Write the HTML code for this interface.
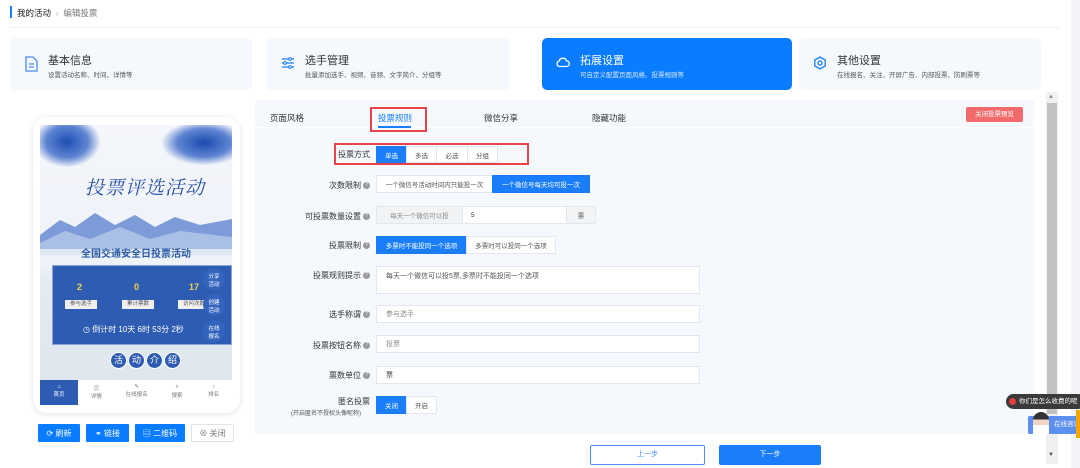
<!DOCTYPE html>
<html><head><meta charset="utf-8"><style>
*{margin:0;padding:0;box-sizing:border-box}
body{width:1080px;height:468px;overflow:hidden;background:#fff;font-family:"Liberation Sans","Noto Sans CJK SC",sans-serif;position:relative;color:#333}
.a{position:absolute}
.card{position:absolute;top:38px;height:52px;background:#f5f8fd;border-radius:5px}
.card .t{position:absolute;left:38px;top:14px;font-size:11px;color:#333}
.card .s{position:absolute;left:38px;top:31px;font-size:6.5px;color:#555}
.card svg{position:absolute;left:14px;top:18px}
.lbl{position:absolute;right:710px;font-size:8px;color:#333;white-space:nowrap}
.q{display:inline-block;width:7px;height:7px;border-radius:50%;background:#999;color:#fff;font-size:5px;line-height:7px;text-align:center;margin-left:2px;vertical-align:middle}
.b{position:absolute;font-size:6.5px;text-align:center;border:1px solid #e2e6ee;background:#fff;color:#555;display:flex;align-items:center;justify-content:center}
.bl{background:#1a7efb;color:#fff;border-color:#1a7efb}
.in{position:absolute;left:376px;width:324px;background:#fff;border:1px solid #e2e6ee;font-size:7px;color:#555;padding-left:9px;display:flex;align-items:center}
.pb{position:absolute;top:424px;height:18px;background:#0a7cff;color:#fff;font-size:8px;display:flex;align-items:center;justify-content:center;border-radius:1px}
</style></head><body>
<div class="a" style="left:10px;top:6px;width:2px;height:12px;background:#1a7efb"></div>
<div class="a" style="left:17px;top:7px;font-size:8.5px;color:#222">我的活动 <span style="color:#aaa">&nbsp;›&nbsp;</span> <span style="color:#777">编辑投票</span></div>
<div class="a" style="left:10px;top:27px;width:1050px;height:1px;background:#eceff3"></div>

<div class="card" style="left:10px;width:242px"><svg width="14" height="16" viewBox="0 0 14 16"><path d="M2 1h7l4 4v10H2z" fill="none" stroke="#4a8cf5" stroke-width="1.3"/><path d="M5 8h5M5 11h5" stroke="#4a8cf5" stroke-width="1.2"/></svg><div class="t">基本信息</div><div class="s">设置活动名称、时间、详情等</div></div>
<div class="card" style="left:267px;width:242px"><svg width="14" height="14" viewBox="0 0 14 14"><path d="M1 3h12M1 7h12M1 11h12" stroke="#1a7efb" stroke-width="1.3"/><circle cx="9" cy="3" r="1.4" fill="#fff" stroke="#1a7efb"/><circle cx="4" cy="7" r="1.4" fill="#fff" stroke="#1a7efb"/><circle cx="9" cy="11" r="1.4" fill="#fff" stroke="#1a7efb"/></svg><div class="t">选手管理</div><div class="s">批量添加选手、视频、音频、文字简介、分组等</div></div>
<div class="card" style="left:542px;width:250px;background:#0a7cff"><svg width="14" height="12" viewBox="0 0 14 12"><path d="M3.5 10.5h7a2.8 2.8 0 0 0 0-5.6A3.8 3.8 0 0 0 3.2 5 2.8 2.8 0 0 0 3.5 10.5z" fill="none" stroke="#fff" stroke-width="1.3"/></svg><div class="t" style="color:#fff">拓展设置</div><div class="s" style="color:#dbe9ff">可自定义配置页面风格、投票规则等</div></div>
<div class="card" style="left:799px;width:242px"><svg width="14" height="14" viewBox="0 0 14 14"><path d="M7 1l5.2 3v6L7 13 1.8 10V4z" fill="none" stroke="#1a7efb" stroke-width="1.3"/><circle cx="7" cy="7" r="2" fill="none" stroke="#1a7efb" stroke-width="1.3"/></svg><div class="t">其他设置</div><div class="s">在线报名、关注、开屏广告、内部投票、防刷票等</div></div>

<!-- phone -->
<div class="a" style="left:33px;top:117px;width:207px;height:296px;background:#fff;border-radius:14px;box-shadow:0 1px 6px rgba(0,0,0,.12)"></div>
<div class="a" style="left:40px;top:125px;width:192px;height:256px;background:linear-gradient(#f4f6fb 0%,#eef2f9 55%,#e4eaf2 62%,#dfe6ee 100%);overflow:hidden">
 <div class="a" style="left:0;top:0;width:60px;height:42px;background:radial-gradient(ellipse at 45% 40%,#1f4fb5,#5f85d2 45%,transparent 72%)"></div>
 <div class="a" style="right:0;top:0;width:70px;height:40px;background:radial-gradient(ellipse at 60% 45%,#1b49b0,#5f85d2 45%,transparent 72%)"></div>
 <svg class="a" style="left:0;top:80px" width="192" height="50" viewBox="0 0 192 50"><path d="M0 30 L20 15 L35 22 L55 8 L75 20 L95 10 L115 22 L135 12 L160 20 L192 14 L192 50 L0 50z" fill="#7d9bd8"/><path d="M0 38 L25 26 L50 34 L80 22 L110 34 L140 26 L192 32 L192 50 L0 50z" fill="#a9bfe6"/><rect x="0" y="44" width="192" height="6" fill="#dfe7f3"/></svg>
 <div class="a" style="left:45px;top:48px;font-family:'Noto Serif CJK SC',serif;font-size:19px;color:#2a4fa8;font-style:italic;letter-spacing:1px">投票评选活动</div>
 <div class="a" style="left:0;top:120px;width:192px;font-size:10px;font-weight:bold;color:#2a5aa8;text-align:center">全国交通安全日投票活动</div>
 <div class="a" style="left:12px;top:140px;width:180px;height:80px;background:#2d5cb2;border:1px solid #8aa5d8">
  <div class="a" style="left:24px;top:16px;color:#f5d34a;font-size:9px;font-weight:bold">2</div>
  <div class="a" style="left:81px;top:16px;color:#f5d34a;font-size:9px;font-weight:bold">0</div>
  <div class="a" style="left:136px;top:16px;color:#f5d34a;font-size:9px;font-weight:bold">17</div>
  <div class="a" style="left:12px;top:34px;width:32px;height:9px;background:#f0f0f0;font-size:5.5px;color:#555;text-align:center;line-height:9px">参与选手</div>
  <div class="a" style="left:69px;top:34px;width:32px;height:9px;background:#f0f0f0;font-size:5.5px;color:#555;text-align:center;line-height:9px">累计票数</div>
  <div class="a" style="left:125px;top:34px;width:32px;height:9px;background:#f0f0f0;font-size:5.5px;color:#555;text-align:center;line-height:9px">访问次数</div>
  <div class="a" style="left:30px;top:58px;color:#fff;font-size:8px;white-space:nowrap">◷ 倒计时 10天 6时 53分 2秒</div>
  <div class="a" style="left:150px;top:2px;width:22px;height:22px;border-radius:50%;background:#3465be;color:#fff;font-size:5.5px;text-align:center;padding-top:4px">分享<br>活动</div>
  <div class="a" style="left:150px;top:28px;width:22px;height:22px;border-radius:50%;background:#3465be;color:#fff;font-size:5.5px;text-align:center;padding-top:4px">创建<br>活动</div>
  <div class="a" style="left:150px;top:54px;width:22px;height:22px;border-radius:50%;background:#3465be;color:#fff;font-size:5.5px;text-align:center;padding-top:4px">在线<br>报名</div>
 </div>
 <div class="a" style="left:70px;top:227px;display:flex;gap:1px">
  <div style="width:17px;height:17px;border-radius:50%;background:#2d5cb2;border:1px solid #fff;color:#fff;font-size:9px;text-align:center;line-height:15px">活</div>
  <div style="width:17px;height:17px;border-radius:50%;background:#2d5cb2;border:1px solid #fff;color:#fff;font-size:9px;text-align:center;line-height:15px">动</div>
  <div style="width:17px;height:17px;border-radius:50%;background:#2d5cb2;border:1px solid #fff;color:#fff;font-size:9px;text-align:center;line-height:15px">介</div>
  <div style="width:17px;height:17px;border-radius:50%;background:#2d5cb2;border:1px solid #fff;color:#fff;font-size:9px;text-align:center;line-height:15px">绍</div>
 </div>
</div>
<div class="a" style="left:40px;top:380px;width:192px;height:25px;background:#fff;display:flex;font-size:5.5px;color:#777;text-align:center">
 <div style="width:38px;background:#2d5cb2;color:#fff;padding-top:4px">⌂<br>首页</div>
 <div style="flex:1;padding-top:4px">▥<br>详情</div>
 <div style="flex:1.2;padding-top:4px">✎<br>在线报名</div>
 <div style="flex:1;padding-top:4px">⌕<br>搜索</div>
 <div style="flex:1;padding-top:4px">♁<br>排名</div>
</div>
<div class="pb" style="left:38px;width:42px">⟳ 刷新</div>
<div class="pb" style="left:86px;width:43px">⚭ 链接</div>
<div class="pb" style="left:135px;width:50px">▤ 二维码</div>
<div class="pb" style="left:191px;width:43px;background:#fff;color:#777;border:1px solid #e0e3e8">⊗ 关闭</div>

<!-- panel -->
<div class="a" style="left:255px;top:100px;width:779px;height:334px;background:#f5f8fd"></div>
<div class="a" style="left:255px;top:127px;width:779px;height:1px;background:#fff"></div>
<div class="a" style="left:270px;top:112px;font-size:8.5px;color:#333">页面风格</div>
<div class="a" style="left:378px;top:112px;font-size:8.5px;color:#1a7efb">投票规则</div>
<div class="a" style="left:378px;top:126px;width:33px;height:1.5px;background:#1a7efb"></div>
<div class="a" style="left:370px;top:107px;width:57px;height:25px;border:2px solid #e8424a"></div>
<div class="a" style="left:484px;top:112px;font-size:8.5px;color:#333">微信分享</div>
<div class="a" style="left:592px;top:112px;font-size:8.5px;color:#333">隐藏功能</div>
<div class="a" style="left:966px;top:107px;width:57px;height:15px;background:#f26a6a;border-radius:2px;color:#fff;font-size:6.5px;text-align:center;line-height:15px">关闭投票预览</div>

<div class="a" style="left:334px;top:143px;width:195px;height:22px;border:2px solid #e8424a"></div>
<div class="lbl" style="top:149px">投票方式</div>
<div class="b bl" style="left:376px;top:146px;width:31px;height:17px">单选</div>
<div class="b" style="left:406px;top:146px;width:31px;height:17px">多选</div>
<div class="b" style="left:436px;top:146px;width:32px;height:17px">必选</div>
<div class="b" style="left:467px;top:146px;width:31px;height:17px">分组</div>

<div class="lbl" style="top:180px">次数限制<span class="q">?</span></div>
<div class="b" style="left:376px;top:175px;width:117px;height:18px">一个微信号活动时间内只能投一次</div>
<div class="b bl" style="left:492px;top:175px;width:98px;height:18px">一个微信号每天均可投一次</div>

<div class="lbl" style="top:211px">可投票数量设置<span class="q">?</span></div>
<div class="b" style="left:376px;top:206px;width:87px;height:18px;background:#f2f3f5;color:#888">每天一个微信可以投</div>
<div class="b" style="left:462px;top:206px;width:105px;height:18px;justify-content:flex-start;padding-left:8px;color:#333">5</div>
<div class="b" style="left:566px;top:206px;width:30px;height:18px;background:#f2f3f5">票</div>

<div class="lbl" style="top:240px">投票限制<span class="q">?</span></div>
<div class="b bl" style="left:376px;top:236px;width:91px;height:18px">多票时不能投同一个选项</div>
<div class="b" style="left:466px;top:236px;width:90px;height:18px">多票时可以投同一个选项</div>

<div class="lbl" style="top:270px">投票规则提示<span class="q">?</span></div>
<div class="in" style="top:266px;height:28px;align-items:flex-start;padding-top:4px">每天一个微信可以投5票,多票时不能投同一个选项</div>

<div class="lbl" style="top:309px">选手称谓<span class="q">?</span></div>
<div class="in" style="top:305px;height:18px;color:#888">参与选手</div>
<div class="lbl" style="top:340px">投票按钮名称<span class="q">?</span></div>
<div class="in" style="top:335px;height:18px;color:#888">投票</div>
<div class="lbl" style="top:370px">票数单位<span class="q">?</span></div>
<div class="in" style="top:366px;height:18px;color:#333">票</div>

<div class="lbl" style="top:396px">匿名投票</div>
<div class="a" style="left:291px;top:408px;font-size:6px;color:#555">(开启匿名不授权头像昵称)</div>
<div class="b bl" style="left:376px;top:396px;width:31px;height:18px">关闭</div>
<div class="b" style="left:406px;top:396px;width:31px;height:18px">开启</div>

<div class="a" style="left:590px;top:445px;width:115px;height:20px;border:1px solid #4a8cf5;border-radius:2px;color:#4a8cf5;font-size:7px;text-align:center;line-height:18px">上一步</div>
<div class="a" style="left:719px;top:445px;width:102px;height:20px;background:#1a7efb;border-radius:2px;color:#fff;font-size:7px;text-align:center;line-height:20px">下一步</div>

<!-- scrollbar -->
<div class="a" style="left:1046px;top:92px;width:12px;height:372px;background:#f0f0f0"></div>
<div class="a" style="left:1047px;top:103px;width:10px;height:311px;background:#c1c1c1"></div>
<div class="a" style="left:1048px;top:94px;font-size:6px;color:#888">▲</div>
<div class="a" style="left:1048px;top:452px;font-size:6px;color:#555">▼</div>
<div class="a" style="left:1071px;top:0;width:9px;height:468px;background:#f3f4f7"></div>

<div class="a" style="left:1006px;top:394px;width:80px;height:15px;border-radius:8px;background:#3a3a3a;color:#fff;font-size:6.5px;line-height:15px;padding-left:13px;white-space:nowrap">你们是怎么收费的呢</div>
<div class="a" style="left:1009px;top:398px;width:7px;height:7px;border-radius:50%;background:#e83b3b"></div>
<div class="a" style="left:1028px;top:416px;width:52px;height:18px;background:#5b8ff0;border-radius:2px;color:#fff;font-size:6.5px;line-height:18px;padding-left:26px;white-space:nowrap">在线咨询</div>
<div class="a" style="left:1033px;top:412px;width:16px;height:22px;border-radius:8px 8px 0 0;background:linear-gradient(#333 0 35%,#f1d4c4 35% 60%,#fff 60%)"></div>
<div class="a" style="left:1076px;top:410px;width:4px;height:28px;background:#f7a500"></div>
</body></html>
